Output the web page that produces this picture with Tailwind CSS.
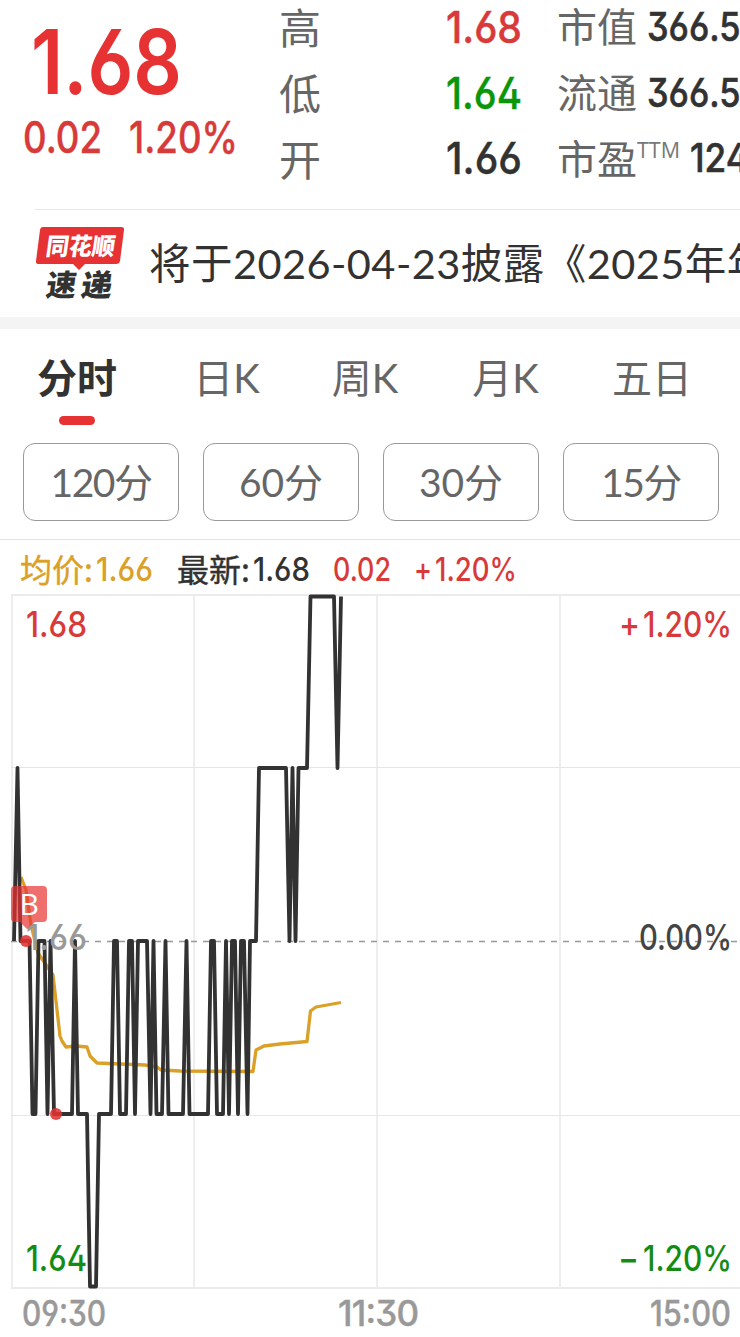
<!DOCTYPE html>
<html lang="zh-CN">
<head>
    <meta charset="UTF-8">
    <meta name="viewport" content="width=device-width, initial-scale=1.0">
    <title>分时行情</title>
    <script src="https://cdn.jsdelivr.net/npm/@tailwindcss/browser@4"></script>
</head>
<body class="w-[740px] h-[1337px] overflow-hidden bg-white text-[#323232] font-['Lato','Noto_Sans_CJK_SC',sans-serif]">

    <!-- Quote summary -->
    <header class="flex h-[209px] overflow-hidden whitespace-nowrap">
        <svg class="w-[279px] h-[209px] shrink-0 font-['Inter',sans-serif] font-semibold [font-feature-settings:'ss01']" fill="#e63232">
            <text x="31" y="94" font-size="89" textLength="151" lengthAdjust="spacingAndGlyphs">1.68</text>
            <g class="font-medium" font-size="43.5" fill="#d83a3a" stroke="#d83a3a" stroke-width="0.4">
                <text x="23" y="153" textLength="79" lengthAdjust="spacingAndGlyphs">0.02</text>
                <text x="129" y="153" textLength="109" lengthAdjust="spacingAndGlyphs">1.20%</text>
            </g>
        </svg>
        <div class="w-[166px] shrink-0 text-[42px] leading-[66px] text-[#666] -mt-[7px] font-['Noto_Sans_CJK_SC',sans-serif]">
            <p>高</p>
            <p>低</p>
            <p>开</p>
        </div>
        <svg class="w-[112px] h-[209px] shrink-0 font-['Inter',sans-serif] font-medium [font-feature-settings:'ss01']" font-size="43.5" stroke-width="0.4">
            <text x="1" y="43" fill="#d83a3a" stroke="#d83a3a" textLength="76" lengthAdjust="spacingAndGlyphs">1.68</text>
            <text x="1" y="109" fill="#0a960a" stroke="#0a960a" textLength="76" lengthAdjust="spacingAndGlyphs">1.64</text>
            <text x="1" y="174" fill="#323232" stroke="#323232" textLength="76" lengthAdjust="spacingAndGlyphs">1.66</text>
        </svg>
        <div class="w-[80px] shrink-0 text-[40px] leading-[66px] text-[#666] -mt-[8px] font-['Noto_Sans_CJK_SC',sans-serif]">
            <p>市值</p>
            <p>流通</p>
            <p>市盈</p>
        </div>
        <svg class="w-[103px] h-[209px] shrink-0 font-['Inter',sans-serif] font-medium [font-feature-settings:'ss01']" font-size="39.5" fill="#323232">
            <g stroke="#323232" stroke-width="0.6">
                <text x="10" y="41" textLength="116" lengthAdjust="spacingAndGlyphs">366.54</text>
                <text x="10" y="107" textLength="116" lengthAdjust="spacingAndGlyphs">366.54</text>
                <text x="53" y="172" textLength="90" lengthAdjust="spacingAndGlyphs">124.2</text>
            </g>
            <text class="font-['Open_Sans',sans-serif] font-normal" x="0" y="158" font-size="21" fill="#777" textLength="43" lengthAdjust="spacingAndGlyphs">TTM</text>
        </svg>
    </header>

    <!-- News strip -->
    <section class="flex items-center h-[108px] ml-[35px] border-t border-[#e8e8e8] whitespace-nowrap overflow-hidden">
        <svg class="w-[90px] h-[76px] shrink-0 font-['Noto_Sans_CJK_SC',sans-serif] font-black" viewBox="35 226 90 76">
            <path d="M43 227H121Q124.500 227 124 230L120 261Q119.500 264 116 264H85L79 270L73 264H39Q35.500 264 36 261L40 230Q40.500 227 43 227Z" fill="#e63232"/>
            <text transform="translate(45 255) skewX(-8)" font-size="24" fill="#fff" textLength="69" lengthAdjust="spacingAndGlyphs">同花顺</text>
            <g font-size="30" fill="#323232">
                <text transform="translate(45 296) skewX(-8)" textLength="30" lengthAdjust="spacingAndGlyphs">速</text>
                <text transform="translate(80 296) skewX(-8)" textLength="31" lengthAdjust="spacingAndGlyphs">递</text>
            </g>
        </svg>
        <p class="ml-[24px] text-[41.500px] tracking-[0.45px]">将于2026-04-23披露《2025年年度报告》</p>
    </section>
    <div class="h-3 bg-[#f4f4f4]"></div>

    <!-- Chart tabs -->
    <nav class="flex h-[114px] pt-[19px] text-[40px] leading-[60px] text-[#666] whitespace-nowrap">
        <div class="w-[154px] flex flex-col items-center">
            <span class="h-[68px] font-bold text-[#323232]">分时</span>
            <span class="w-9 h-[9px] rounded-full bg-[#e63232]"></span>
        </div>
        <span class="w-[145px] text-center">日K</span>
        <span class="w-[132px] text-center">周K</span>
        <span class="w-[149px] text-center">月K</span>
        <span class="w-[144px] text-center">五日</span>
    </nav>

    <!-- Minute periods -->
    <div class="flex gap-6 px-[23px] h-[96px] text-[39px] text-[#666]">
        <button class="w-[156px] h-[78px] shrink-0 rounded-xl border border-[#999] tracking-[-1.500px]">120分</button>
        <button class="w-[156px] h-[78px] shrink-0 rounded-xl border border-[#999]">60分</button>
        <button class="w-[156px] h-[78px] shrink-0 rounded-xl border border-[#999]">30分</button>
        <button class="w-[156px] h-[78px] shrink-0 rounded-xl border border-[#999] tracking-[-1.500px]">15分</button>
    </div>

    <!-- Intraday chart -->
    <svg class="block w-[740px] h-[798px] font-['Inter','Noto_Sans_CJK_SC',sans-serif] font-medium [font-feature-settings:'ss01']" viewBox="0 539 740 798">
        <path d="M0 539.500H740" stroke="#e4e4e4"/>

        <g font-size="32.5">
            <g class="font-['Noto_Sans_CJK_SC',sans-serif] font-normal" font-size="32" stroke-width="0.4">
                <text x="20" y="582" fill="#daa028" stroke="#daa028">均价:</text>
                <text x="177" y="582" fill="#323232" stroke="#323232">最新:</text>
            </g>
            <text x="96" y="581" fill="#daa028" textLength="57" lengthAdjust="spacingAndGlyphs">1.66</text>
            <text x="253" y="581" fill="#323232" textLength="57" lengthAdjust="spacingAndGlyphs">1.68</text>
            <text x="333" y="581" fill="#d83a3a" textLength="58" lengthAdjust="spacingAndGlyphs">0.02</text>
            <text x="414" y="581" fill="#d83a3a" textLength="18" lengthAdjust="spacingAndGlyphs">+</text>
            <text x="435" y="581" fill="#d83a3a" textLength="82" lengthAdjust="spacingAndGlyphs">1.20%</text>
        </g>

        <!-- Grid -->
        <g fill="none" stroke="#ebebeb">
            <path d="M11 595H740M11 1288H740" stroke-width="2"/>
            <path d="M12 595V1288M194 595V1288M377 595V1288M560 595V1288" stroke-width="1.700"/>
            <path d="M11 767.500H740M11 1115.500H740" stroke="#e6e6e6"/>
        </g>
        <path d="M11 941.500H740" stroke="#999" stroke-width="1.600" stroke-dasharray="6 6"/>

        <!-- Average and price lines -->
        <polyline fill="none" stroke="#daa028" stroke-width="3.300" stroke-linejoin="round" points="21,877 26,890 31,925 38,953 53,975 60,1036 62,1041 66,1047 76,1046 87,1047 90,1056 97,1063 145,1065 157,1067 161,1070 180,1071 253,1071.500 256,1050 264,1046 280,1044 307,1041.500 310.500,1011 316,1007 341,1002.500"/>
        <polyline fill="none" stroke="#323232" stroke-width="3.800" stroke-linejoin="round" points="14,941 17.500,768 20.500,941 29.500,941 32.500,1114 35.500,1114 38.500,941 44.500,941 47.500,1114 50.500,941 54,1114 72,1114 75,941 78,1114 87,1114 90,1286.500 96,1286.500 99,1114 111,1114 114,941 117,941 120,1114 126,1114 129,941 132,941 135,1114 138,941 147,941 150.500,1114 153.500,941 156.500,1114 162,1114 165.500,941 168.500,1114 183,1114 186.500,941 189.500,1114 208,1114 211,941 214,941 217,1114 223,1114 226,941 229,1114 232,941 235,941 238,1114 241,941 244,941 247.500,1114 250,941 256,941 259,768 286,768 289.500,941 292.500,768 295.500,941 298.500,768 307,768 310.500,596.500 334,596.500 337.500,768 341,596.500"/>

        <!-- Axis labels -->
        <g font-size="35">
            <text x="26" y="637" fill="#d83a3a" textLength="61" lengthAdjust="spacingAndGlyphs">1.68</text>
            <text x="26" y="950" fill="#999" textLength="61" lengthAdjust="spacingAndGlyphs">1.66</text>
            <text x="26" y="1271" fill="#148c14" textLength="61" lengthAdjust="spacingAndGlyphs">1.64</text>
            <text x="619" y="637" fill="#d83a3a" textLength="21" lengthAdjust="spacingAndGlyphs">+</text>
            <text x="643" y="637" fill="#d83a3a" textLength="89" lengthAdjust="spacingAndGlyphs">1.20%</text>
            <text x="639" y="950" fill="#444" textLength="93" lengthAdjust="spacingAndGlyphs">0.00%</text>
            <text x="618" y="1271" fill="#148c14" textLength="21" lengthAdjust="spacingAndGlyphs">−</text>
            <text x="643" y="1271" fill="#148c14" textLength="89" lengthAdjust="spacingAndGlyphs">1.20%</text>
            <g fill="#999" stroke="#999" stroke-width="0.4">
                <text x="22" y="1326" textLength="84" lengthAdjust="spacingAndGlyphs">09:30</text>
                <text x="338" y="1326" textLength="81" lengthAdjust="spacing">11:30</text>
                <text x="650" y="1326" textLength="81" lengthAdjust="spacingAndGlyphs">15:00</text>
            </g>
        </g>

        <!-- Buy markers -->
        <path d="M15 886H43Q47 886 47 890V918Q47 922 43 922H35L27 929L20 922H15Q11 922 11 918V890Q11 886 15 886Z" fill="#e83232" fill-opacity="0.7"/>
        <text class="font-['Open_Sans',sans-serif] font-normal" x="19.500" y="915" font-size="30" fill="#fff">B</text>
        <circle cx="26" cy="941" r="6" fill="#e03232" fill-opacity="0.88"/>
        <circle cx="56" cy="1114" r="6" fill="#e03232" fill-opacity="0.88"/>
    </svg>

</body>
</html>
